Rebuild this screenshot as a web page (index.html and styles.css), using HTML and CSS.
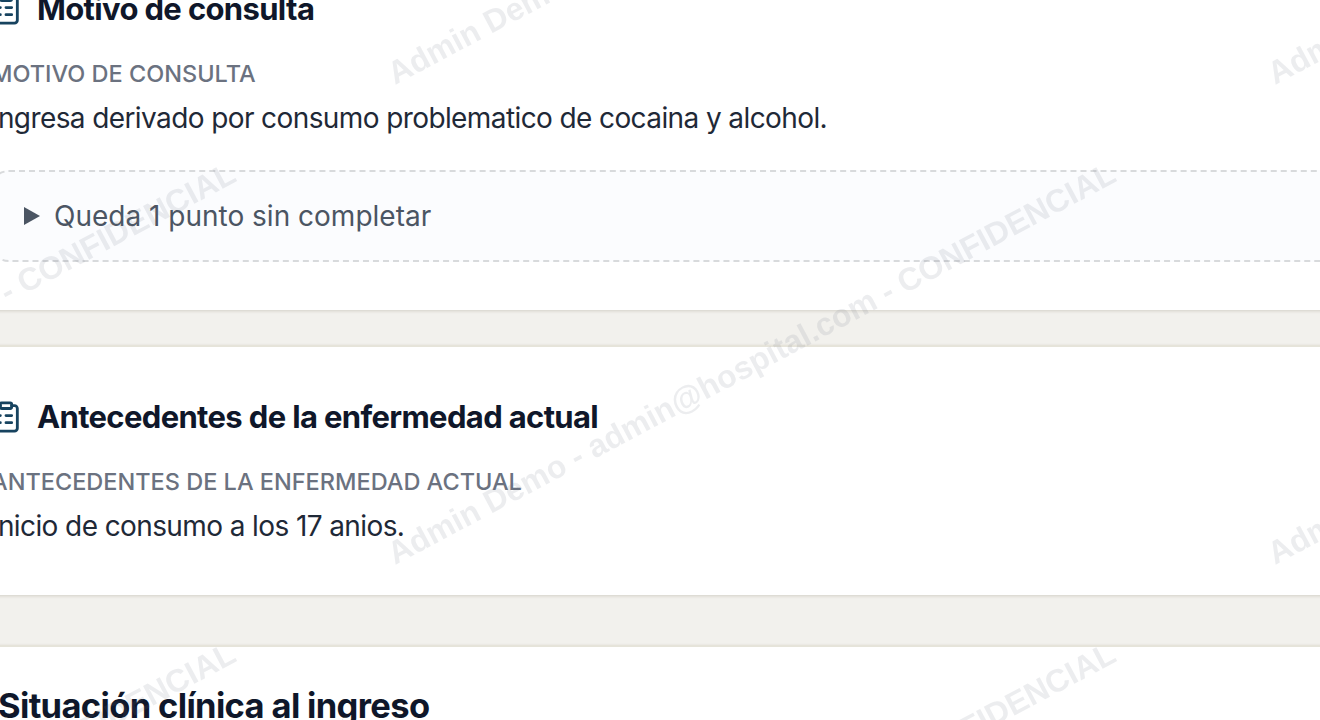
FILE: index.html
```html
<!DOCTYPE html>
<html lang="es">
<head>
<meta charset="UTF-8">
<title>Ficha clinica</title>
<link rel="stylesheet" href="styles.css">
</head>
<body>
<main class="page">
    <!-- motivo -->
    <section class="card">
        <h2 class="card-title">
            <svg class="card-icon" viewBox="0 0 24 24"><rect x="8" y="2" width="8" height="4" rx="1"/><path d="M16 4h2a2 2 0 0 1 2 2v14a2 2 0 0 1-2 2H6a2 2 0 0 1-2-2V6a2 2 0 0 1 2-2h2"/><path d="M12 11h4M12 16h4M8 11h.01M8 16h.01"/></svg>
            Motivo de consulta
        </h2>
        <div class="field-label">Motivo de consulta</div>
        <p class="field-value">Ingresa derivado por consumo problematico de cocaina y alcohol.</p>
        <div class="pending">
            <span class="pending-arrow"></span>
            Queda 1 punto sin completar
        </div>
    </section>

    <!-- antecedentes -->
    <section class="card card-spaced">
        <h2 class="card-title">
            <svg class="card-icon" viewBox="0 0 24 24"><rect x="8" y="2" width="8" height="4" rx="1"/><path d="M16 4h2a2 2 0 0 1 2 2v14a2 2 0 0 1-2 2H6a2 2 0 0 1-2-2V6a2 2 0 0 1 2-2h2"/><path d="M12 11h4M12 16h4M8 11h.01M8 16h.01"/></svg>
            Antecedentes de la enfermedad actual
        </h2>
        <div class="field-label">Antecedentes de la enfermedad actual</div>
        <p class="field-value">Inicio de consumo a los 17 anios.</p>
    </section>

    <!-- situacion clinica -->
    <section class="card card-last">
        <h2 class="card-title card-title-big">Situación clínica al ingreso</h2>
    </section>
</main>

<!-- marca de agua -->
<svg class="watermark" width="1320" height="720">
    <text x="-485" y="85" transform="rotate(-28 -485 85)">Admin Demo - admin@hospital.com - CONFIDENCIAL</text>
    <text x="395" y="85" transform="rotate(-28 395 85)">Admin Demo - admin@hospital.com - CONFIDENCIAL</text>
    <text x="1275" y="85" transform="rotate(-28 1275 85)">Admin Demo - admin@hospital.com - CONFIDENCIAL</text>
    <text x="-485" y="565" transform="rotate(-28 -485 565)">Admin Demo - admin@hospital.com - CONFIDENCIAL</text>
    <text x="395" y="565" transform="rotate(-28 395 565)">Admin Demo - admin@hospital.com - CONFIDENCIAL</text>
    <text x="1275" y="565" transform="rotate(-28 1275 565)">Admin Demo - admin@hospital.com - CONFIDENCIAL</text>
    <text x="-485" y="1045" transform="rotate(-28 -485 1045)">Admin Demo - admin@hospital.com - CONFIDENCIAL</text>
    <text x="395" y="1045" transform="rotate(-28 395 1045)">Admin Demo - admin@hospital.com - CONFIDENCIAL</text>
</svg>
</body>
</html>
```
FILE: styles.css
```css
html, body {
    margin: 0;
    padding: 0;
    height: 720px;
    overflow: hidden;
    background: #f2f1ed;
}

body {
    font-family: Inter, "Noto Sans", sans-serif;
}

.page {
    width: 1420px;
    margin: -63px 0 0 -40px;
}

.card {
    background: #fff;
    border-top: 2px solid #e6e4da;
    box-shadow: 0 1px 3px rgba(120, 113, 90, 0.25);
    padding: 50px 10px 48px 31px;
}

.card-spaced {
    margin-top: 35px;
    padding-bottom: 47px;
}

.card-last {
    margin-top: 50px;
    padding: 39px 10px 40px 38px;
}

.card-title {
    display: flex;
    align-items: center;
    gap: 19px;
    height: 40px;
    margin: 0;
    font-size: 31px;
    line-height: 40px;
    font-weight: 700;
    letter-spacing: -0.65px;
    color: #0f172a;
}

.card-title-big {
    font-size: 34.5px;
}

.card-icon {
    width: 34px;
    height: 34px;
    margin-left: -2px;
    margin-right: -5px;
    flex: none;
    fill: none;
    stroke: #17435f;
    stroke-width: 2;
    stroke-linecap: round;
    stroke-linejoin: round;
}

.field-label {
    margin-top: 29px;
    font-size: 23.5px;
    line-height: 32px;
    font-weight: 500;
    color: #6b7280;
    text-transform: uppercase;
}

.field-value {
    margin: 6px 0 0;
    font-size: 28px;
    line-height: 44px;
    letter-spacing: -0.6px;
    color: #1f2937;
}

.pending {
    display: flex;
    align-items: center;
    gap: 14px;
    height: 92px;
    box-sizing: border-box;
    margin: 30px 0 0 -2px;
    padding-left: 33px;
    border: 2px dashed #d8dadc;
    border-radius: 20px;
    background: #fbfcfe;
    font-size: 28px;
    color: #4b5563;
}

.pending-arrow {
    width: 0;
    height: 0;
    border-left: 16px solid #4b5563;
    border-top: 9px solid transparent;
    border-bottom: 9px solid transparent;
}

.watermark {
    position: fixed;
    top: 0;
    left: 0;
    pointer-events: none;
}

.watermark text {
    font-family: "Liberation Sans", sans-serif;
    font-size: 32px;
    font-weight: 700;
    fill: rgba(107, 114, 128, 0.13);
}
```
